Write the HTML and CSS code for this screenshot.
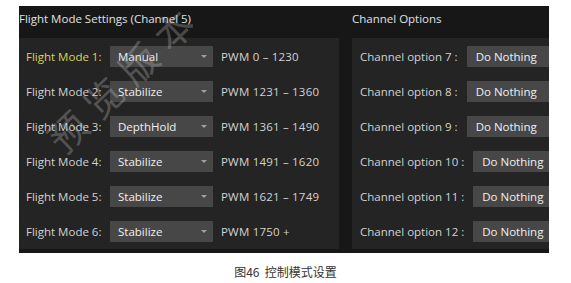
FILE: index.html
```html
<!DOCTYPE html>
<html lang="zh">
<head>
  <meta charset="UTF-8">
  <title>控制模式设置</title>
  <link rel="stylesheet" href="styles.css">
</head>
<body>

<div class="shot">
  <div class="heads">
    <div class="head">Flight Mode Settings (Channel 5)</div>
    <div class="head">Channel Options</div>
  </div>

  <div class="panels">
    <div class="panel modes">
      <div class="row">
        <span class="label active">Flight Mode 1:</span>
        <span class="combo">Manual</span>
        <span class="pwm">PWM 0 – 1230</span>
      </div>
      <div class="row">
        <span class="label">Flight Mode 2:</span>
        <span class="combo">Stabilize</span>
        <span class="pwm">PWM 1231 – 1360</span>
      </div>
      <div class="row">
        <span class="label">Flight Mode 3:</span>
        <span class="combo">DepthHold</span>
        <span class="pwm">PWM 1361 – 1490</span>
      </div>
      <div class="row">
        <span class="label">Flight Mode 4:</span>
        <span class="combo">Stabilize</span>
        <span class="pwm">PWM 1491 – 1620</span>
      </div>
      <div class="row">
        <span class="label">Flight Mode 5:</span>
        <span class="combo">Stabilize</span>
        <span class="pwm">PWM 1621 – 1749</span>
      </div>
      <div class="row">
        <span class="label">Flight Mode 6:</span>
        <span class="combo">Stabilize</span>
        <span class="pwm">PWM 1750 +</span>
      </div>
    </div>

    <div class="panel options">
      <div class="row">
        <span class="label">Channel option 7 :</span>
        <span class="combo">Do Nothing</span>
      </div>
      <div class="row">
        <span class="label">Channel option 8 :</span>
        <span class="combo">Do Nothing</span>
      </div>
      <div class="row">
        <span class="label">Channel option 9 :</span>
        <span class="combo">Do Nothing</span>
      </div>
      <div class="row">
        <span class="label">Channel option 10 :</span>
        <span class="combo">Do Nothing</span>
      </div>
      <div class="row">
        <span class="label">Channel option 11 :</span>
        <span class="combo">Do Nothing</span>
      </div>
      <div class="row">
        <span class="label">Channel option 12 :</span>
        <span class="combo">Do Nothing</span>
      </div>
    </div>
  </div>
</div>

<div class="watermark">预览版本</div>

<p class="caption">图46&nbsp; 控制模式设置</p>

</body>
</html>
```

FILE: styles.css
```css
body {
  position: relative;
  margin: 0;
  background: #fff;
  font-family: 'Open Sans', 'Liberation Sans', sans-serif;
}

.shot {
  margin: 6px 0 0 19px;
  width: 530px;
  background: #171717;
  padding-bottom: 4px;
  overflow: hidden;
  font-size: 11.5px;
  color: #d2d2d2;
}

.heads,
.panels {
  display: grid;
  grid-template-columns: 320px 1fr;
  column-gap: 13px;
}

.head {
  height: 32px;
  line-height: 25px;
  color: #e2e2e2;
  white-space: nowrap;
}

.panel {
  background: #242424;
  padding-top: 1px;
  height: 210px;
}

.modes {
  padding-left: 7px;
}

.options {
  padding-left: 8px;
}

.row {
  display: flex;
  align-items: center;
  height: 35px;
  white-space: nowrap;
}

.modes .label {
  width: 84px;
}

.options .label {
  margin-right: 9px;
}

.label.active {
  color: #d6d652;
}

.combo {
  position: relative;
  height: 21px;
  line-height: 21px;
  padding-left: 8px;
  background: #474747;
  color: #f0f0f0;
  font-weight: 500;
}

.modes .combo {
  width: 95px;
}

.modes .combo::after {
  content: "";
  position: absolute;
  right: 6px;
  top: 9px;
  border-left: 3px solid transparent;
  border-right: 3px solid transparent;
  border-top: 3px solid #a0a0a0;
}

.options .combo {
  width: 90px;
  padding-left: 9px;
}

.pwm {
  margin-left: 8px;
  letter-spacing: 0.2px;
}

.watermark {
  position: absolute;
  left: 34px;
  top: 124px;
  transform: rotate(-44deg);
  transform-origin: left top;
  font-family: 'Noto Sans CJK SC', sans-serif;
  font-size: 38px;
  letter-spacing: 11px;
  color: rgba(200, 200, 200, 0.3);
  white-space: nowrap;
}

.caption {
  margin: 10px 0 0;
  text-align: center;
  font-family: 'Noto Sans CJK SC', sans-serif;
  font-size: 12px;
  color: #333;
}
```
